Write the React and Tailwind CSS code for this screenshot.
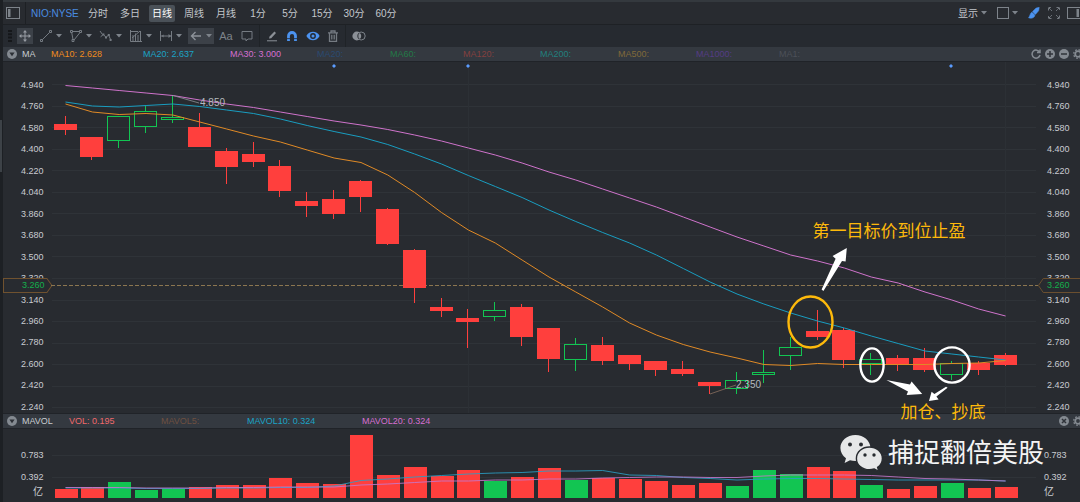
import { useState } from "react";

const periods = ["分时", "多日", "日线", "周线", "月线", "1分", "5分", "15分", "30分", "60分"];

const maItems = [
  { text: "MA10: 2.628", cls: "w-[92px] text-[#f08c1e]" },
  { text: "MA20: 2.637", cls: "w-[87px] text-[#1ba3c6]" },
  { text: "MA30: 3.000", cls: "w-[87px] text-[#d66fd0]" },
  { text: "MA20:", cls: "w-[73px] text-[#2b4a72]" },
  { text: "MA60:", cls: "w-[73px] text-[#237a47]" },
  { text: "MA120:", cls: "w-[77px] text-[#83403f]" },
  { text: "MA200:", cls: "w-[78px] text-[#22807f]" },
  { text: "MA500:", cls: "w-[78px] text-[#80693a]" },
  { text: "MA1000:", cls: "w-[83px] text-[#543c85]" },
  { text: "MA1:", cls: "w-[40px] text-[#4c5058]" },
];

const volItems = [
  { text: "VOL: 0.195", cls: "w-[92px] text-[#f0696c]" },
  { text: "MAVOL5:", cls: "w-[86px] text-[#6e5040]" },
  { text: "MAVOL10: 0.324", cls: "w-[115px] text-[#1ba3c6]" },
  { text: "MAVOL20: 0.324", cls: "w-[90px] text-[#d66fd0]" },
];

const prices = [
  "4.940", "4.760", "4.580", "4.400", "4.220", "4.040", "3.860", "3.680",
  "3.500", "3.320", "3.140", "2.960", "2.780", "2.600", "2.420", "2.240",
];

// [body top, body bottom, high, low, rising]
const candles = [
  [124, 130, 116, 135, 0],
  [137, 157, 137, 160, 0],
  [116, 141, 116, 148, 1],
  [111, 127, 106, 133, 1],
  [117, 120, 95, 123, 1],
  [127, 147, 113, 147, 0],
  [151, 167, 148, 184, 0],
  [154, 162, 142, 167, 0],
  [166, 191, 160, 197, 0],
  [201, 206, 192, 217, 0],
  [199, 214, 190, 219, 0],
  [181, 197, 180, 212, 0],
  [209, 244, 208, 245, 0],
  [250, 288, 249, 303, 0],
  [307, 311, 298, 317, 0],
  [318, 322, 309, 348, 0],
  [310, 317, 302, 321, 1],
  [307, 337, 304, 346, 0],
  [328, 359, 328, 372, 0],
  [344, 360, 338, 371, 1],
  [345, 361, 337, 365, 0],
  [355, 364, 355, 370, 0],
  [361, 370, 361, 376, 0],
  [369, 374, 361, 376, 0],
  [382, 386, 382, 394, 0],
  [380, 389, 372, 394, 1],
  [372, 375, 350, 383, 1],
  [347, 356, 337, 370, 1],
  [331, 337, 310, 340, 0],
  [330, 360, 328, 368, 0],
  [359, 364, 353, 375, 1],
  [358, 365, 355, 371, 0],
  [358, 370, 348, 372, 0],
  [363, 375, 361, 380, 1],
  [363, 370, 361, 375, 0],
  [355, 365, 353, 366, 0],
];

const ma10 = [
  104, 112, 114.5, 113.5, 115, 122, 129, 136, 142, 150, 158, 162.5, 175, 192.5, 212.5, 230, 243, 260,
  277, 292, 307, 323, 335, 344.5, 352, 358, 364.5, 365.5, 363.5, 364.5, 364.5, 364.5, 364.5, 363.5, 363, 360.5,
];
const ma20 = [
  102, 106, 107, 105.5, 104, 106.5, 110, 113.5, 119, 125.5, 131.5, 137, 144.5, 154, 164, 175.5, 186.5, 197.5,
  210, 221.5, 232.5, 243, 255, 268.5, 282, 294, 304, 313, 321, 328, 336, 343.5, 351, 354, 357, 360,
];
const ma30 = [
  85.5, 88, 90.5, 93, 95.5, 100, 104, 107.5, 112, 116.5, 121, 125, 129.5, 135, 141, 148, 155, 163,
  172, 180, 189, 198, 207, 217, 227, 237, 246, 255, 261, 268, 277, 283, 292, 300, 309, 316,
];

const volTops = [
  489, 487, 482, 490, 489, 487, 485, 485, 478, 483, 484, 435, 475, 467, 476, 470, 481, 477,
  468, 480, 478, 479, 481, 485, 483, 486, 470, 474, 467, 471, 485, 489, 486, 483, 488, 487,
];
const volMa10 = [
  488, 488, 488, 488.5, 488.5, 488.5, 488, 488, 487.5, 487.5, 486, 480.5, 479, 477, 475.5, 474, 473, 472.5,
  471, 471, 470.5, 475, 475.5, 477.5, 478.5, 480, 479, 478.5, 478.5, 479, 479.5, 480, 480, 480, 480, 481,
];
const volMa20 = [
  487.5, 487.5, 487.5, 488, 488, 488, 487.5, 487.5, 487, 487, 487, 485, 484, 482.5, 481, 481, 480, 480,
  479, 479, 478, 477.5, 477, 477, 477.5, 477.5, 476, 475, 475, 475, 475.5, 477, 478.5, 479, 480, 481,
];

const RED = "#ff3f3d";
const GREEN = "#12c552";

const cx = (i) => 65.5 + i * 26.86;
const line = (ys) => ys.map((y, i) => `${cx(i).toFixed(1)},${y}`).join(" ");

function Caret({ className = "" }) {
  return (
    <svg viewBox="0 0 6 4" className={`w-[6px] h-[4px] shrink-0 ${className}`} fill="#7d838a">
      <path d="M0 0h6L3 3.6z" />
    </svg>
  );
}

function Icon({ children, className = "w-3 h-3" }) {
  return (
    <svg viewBox="0 0 12 12" className={`shrink-0 ${className}`} fill="none" stroke="#757b82" strokeWidth="1">
      {children}
    </svg>
  );
}

function PanelIcon({ flip }) {
  return (
    <svg viewBox="0 0 14 12" className={`w-[14px] h-3 shrink-0 ${flip ? "-scale-x-100" : ""}`} fill="none" stroke="#7d838a">
      <rect x="0.5" y="0.5" width="13" height="11" />
      <rect x="2" y="2" width="2.5" height="8" fill="#7d838a" stroke="none" />
    </svg>
  );
}

function TopBar() {
  const [active, setActive] = useState("日线");
  return (
    <header className="flex items-center h-[25px] pl-[3px] border-t-2 border-b border-t-[#34393e] border-b-[#1e2125] text-[10px]">
      <button aria-label="Side panel" className="cursor-pointer">
        <PanelIcon />
      </button>
      <span className="w-px h-full ml-[5px] bg-[#1d2024]" />
      <a href="#quote" className="ml-[5px] w-[51px] shrink-0 text-[#4a8be0]">NIO:NYSE</a>
      <nav className="flex gap-[6px] ml-[3px]">
        {periods.map((p) => (
          <button
            key={p}
            onClick={() => setActive(p)}
            className={`w-[26px] h-[17px] flex items-center justify-center whitespace-nowrap rounded-[2px] cursor-pointer ${
              p === active ? "bg-[#4a5158] text-white" : "text-[#c3c7cc]"
            }`}
          >
            {p}
          </button>
        ))}
      </nav>
      <div className="flex items-center ml-auto shrink-0">
        <button className="flex items-center gap-[3px] text-[#c3c7cc] cursor-pointer">
          显示
          <Caret />
        </button>
        <button aria-label="Layout" className="flex items-center gap-[3px] ml-[10px] cursor-pointer">
          <Icon>
            <rect x="0.5" y="0.5" width="11" height="11" stroke="#7d838a" />
          </Icon>
          <Caret />
        </button>
        <button aria-label="Draw" className="ml-[10px] cursor-pointer">
          <Icon>
            <path d="M11.2 0.4L8.2 1L4.6 4.6L7.4 7.4L10.6 3.8z M4 5.2C2 6.2 2.2 8.8 0.6 10.8C3.4 11.8 6.8 10.8 6.8 8z" fill="#4c93f0" stroke="#4c93f0" strokeWidth="0.6" />
          </Icon>
        </button>
        <button aria-label="Full screen" className="ml-2 cursor-pointer">
          <Icon>
            <path d="M0.5 3.5v-3h3M8.5 0.5h3v3M11.5 8.5v3h-3M3.5 11.5h-3v-3M1 1l3 3M11 1l-3 3M11 11l-3-3M1 11l3-3" strokeDasharray="2.4 0.6" />
          </Icon>
        </button>
        <button aria-label="Right panel" className="ml-[7px] w-[13px] overflow-hidden cursor-pointer">
          <PanelIcon flip />
        </button>
      </div>
    </header>
  );
}

function Tool({ label, children }) {
  return (
    <button aria-label={label} className="flex items-center gap-1 cursor-pointer">
      {children}
      <Caret />
    </button>
  );
}

function ToolBar() {
  return (
    <div className="flex items-center h-[22px] pl-[5px] bg-[#262a30]">
      <svg viewBox="0 0 4 12" className="w-1 h-3 shrink-0" fill="#15171a">
        <path d="M0 0h4v2H0zM0 3.3h4v2H0zM0 6.6h4v2H0zM0 10h4v2H0z" />
      </svg>
      <button aria-label="Move" className="w-4 h-4 ml-[5px] flex items-center justify-center bg-[#3c4148] cursor-pointer">
        <Icon>
          <path d="M6 1v10M1 6h10" stroke="#979ca3" />
          <path d="M6 0l2 2.4H4zM6 12l2-2.4H4zM0 6l2.4-2v4zM12 6L9.6 4v4z" fill="#979ca3" stroke="none" />
        </Icon>
      </button>
      <div className="flex gap-2 ml-[7px]">
        <Tool label="Line">
          <Icon>
            <path d="M2.5 9.5L9.5 2.5" />
            <path d="M0.5 9.5h2v2h-2zM9.5 0.5h2v2h-2z" />
          </Icon>
        </Tool>
        <Tool label="Shape">
          <Icon>
            <path d="M2.5 1.5h7M1.7 2.5L3 9.5M10 2.5L4 10" />
            <path d="M0.5 0.5h2v2h-2zM9.5 0.5h2v2h-2zM2 9.5h2v2H2z" />
          </Icon>
        </Tool>
        <Tool label="Wave">
          <Icon className="w-[14px] h-3 -mx-px">
            <path d="M0 1L2.4 4.4M0.6 6.8L3.4 4.4L6 7.4L8.6 5L10.6 9.6" />
            <path d="M2.4 3.4h2v2h-2zM5 6.4h2v2H5zM7.8 4h2v2h-2zM9.6 9h2v2h-2z" fill="#757b82" stroke="none" />
          </Icon>
        </Tool>
        <Tool label="Statistics">
          <Icon>
            <path d="M0.5 0v11.5H12M0.5 1.5H8M3 5v6M5.5 3.5V11M8 5v6M10.5 1v10M2 8l8-7" />
          </Icon>
        </Tool>
        <Tool label="Measure">
          <Icon>
            <path d="M0.5 1v10M11.5 1v10M1 6h10" />
            <path d="M8.5 4v4l2.6-2zM3.6 4.6v2.8L1.6 6z" fill="#757b82" stroke="none" />
          </Icon>
        </Tool>
      </div>
      <button aria-label="Arrow" className="w-[26px] h-4 ml-[6px] flex items-center justify-center gap-1 bg-[#3c4148] cursor-pointer">
        <Icon>
          <path d="M11 6H1.5M5.5 2L1.5 6l4 4" stroke="#8d9299" strokeWidth="1.4" />
        </Icon>
        <Caret />
      </button>
      <button aria-label="Text" className="ml-[5px] w-[14px] text-[11px] leading-4 text-[#7d838a] cursor-pointer">Aa</button>
      <button aria-label="Comment" className="ml-2 cursor-pointer">
        <Icon>
          <path d="M1 1.5h10v7.5H7L5 11V9H1z" />
        </Icon>
      </button>
      <span className="w-px h-full ml-[6px] bg-[#1f2327]" />
      <button aria-label="Edit" className="ml-[6px] cursor-pointer">
        <Icon>
          <path d="M1 10.8h10" stroke="#8b9097" />
          <path d="M3 8.6L3.6 6.4L8.4 1.4L10 3L5.2 8.2z" fill="#8b9097" stroke="none" />
        </Icon>
      </button>
      <button aria-label="Magnet" className="ml-2 cursor-pointer">
        <Icon>
          <path d="M2.5 11V6a3.5 3.5 0 0 1 7 0v5" stroke="#4c93f0" strokeWidth="2.8" />
          <path d="M0.8 8.6h3.4M7.8 8.6h3.4" stroke="#262a30" strokeWidth="0.8" />
        </Icon>
      </button>
      <button aria-label="Visibility" className="ml-2 cursor-pointer">
        <Icon className="w-[14px] h-[14px]">
          <path d="M0.3 6C2.8 1.2 9.2 1.2 11.7 6C9.2 10.8 2.8 10.8 0.3 6z" fill="#4c93f0" stroke="none" />
          <circle cx="6" cy="6" r="1.9" fill="#4c93f0" stroke="#262a30" strokeWidth="1.2" />
        </Icon>
      </button>
      <button aria-label="Delete" className="ml-[7px] cursor-pointer">
        <Icon>
          <path d="M1 2.8h10M4 2.5V1h4v1.5M2.5 3v8.3h7V3M4.8 4.8v4.8M7.2 4.8v4.8" strokeWidth="1.3" />
        </Icon>
      </button>
      <span className="w-px h-full ml-[6px] bg-[#1f2327]" />
      <button aria-label="Compare" className="ml-[6px] cursor-pointer">
        <svg viewBox="0 0 14 10" className="w-[14px] h-[10px]">
          <circle cx="9.2" cy="5" r="4" fill="none" stroke="#7d838a" />
          <circle cx="4.8" cy="5" r="4.4" fill="#8b9097" />
          <path d="M7.4 1.8a4 4 0 0 0 0 6.4" fill="none" stroke="#262a30" />
        </svg>
      </button>
    </div>
  );
}

function Collapse() {
  return (
    <button aria-label="Collapse" className="w-[10px] h-[10px] shrink-0 cursor-pointer">
      <svg viewBox="0 0 10 10" className="w-full h-full">
        <circle cx="5" cy="5" r="5" fill="#848a91" />
        <path d="M2.4 3.6h5.2L5 7.2z" fill="#2c3036" />
      </svg>
    </button>
  );
}

function RoundIcon({ label, d, ring }) {
  return (
    <button aria-label={label} className="w-[10px] h-[10px] shrink-0 cursor-pointer">
      <svg viewBox="0 0 10 10" className="w-full h-full" fill="none">
        {!ring && <circle cx="5" cy="5" r="5" fill="#848a91" />}
        <path d={d} stroke={ring ? "#848a91" : "#2f333a"} strokeWidth="1.5" />
      </svg>
    </button>
  );
}

function Gear() {
  return (
    <button aria-label="Settings" className="w-[10px] h-[10px] shrink-0 cursor-pointer">
      <svg viewBox="0 0 10 10" className="w-full h-full" fill="none" stroke="#848a91">
        <circle cx="5" cy="5" r="2.8" strokeWidth="1.8" />
        <circle cx="5" cy="5" r="4.3" strokeWidth="1.3" strokeDasharray="1.7 1.68" />
      </svg>
    </button>
  );
}

function IndicatorBar({ name, items, nameCls, className, children }) {
  return (
    <div className={`flex items-center pl-1 bg-[#343940] border-b border-[#202328] text-[9px] leading-3 overflow-hidden ${className}`}>
      <Collapse />
      <span className={`ml-[5px] shrink-0 text-[#c8ccd0] ${nameCls}`}>{name}</span>
      {items.map((it) => (
        <span key={it.text} className={`shrink-0 whitespace-nowrap ${it.cls}`}>
          {it.text}
        </span>
      ))}
      <div className="ml-auto flex gap-1 -mr-[3px] shrink-0">{children}</div>
    </div>
  );
}

function PriceAxis({ right }) {
  return (
    <div
      className={`relative shrink-0 flex flex-col justify-between pt-[17px] text-[9px] leading-3 text-[#c8ccd0] ${
        right ? "w-10 pl-[7px]" : "w-[47px] pl-[18px]"
      }`}
    >
      {prices.map((p) => (
        <span key={p}>{p}</span>
      ))}
      {/* last price tag sits over the scale */}
      <div className={`absolute top-[61.5%] h-[15px] ${right ? "-left-[2px] right-0" : "left-0 -right-[2px]"}`}>
        <svg viewBox="0 0 48 15" preserveAspectRatio="none" className="absolute inset-0 w-full h-full" fill="#282b30" stroke="#70522f">
          {right ? <path d="M49 0.5H6L0.5 7.5L6 14.5H49" /> : <path d="M0.5 0.5H43L48 7.5L43 14.5H0.5z" />}
        </svg>
        <span className={`relative block leading-[15px] text-[#14b04c] ${right ? "pl-[9px]" : "pl-[19px]"}`}>3.260</span>
      </div>
    </div>
  );
}

function PriceChart() {
  return (
    <svg viewBox="50 62 990 351" className="flex-1 min-w-0 h-auto overflow-visible relative z-10">
      {prices.map((p, i) => (
        <path key={p} d={`M52 ${Math.round(84 + i * 21.55) + 0.5}H1036`} stroke="#2f3338" />
      ))}
      <path d="M468.5 62V413M1005.5 62V413" stroke="#2c3035" />
      <path d="M51 285.5H1038" stroke="#8c7650" strokeDasharray="4 2" />

      {[334, 468, 951].map((x) => (
        <path key={x} d={`M${x - 2} 66l2-2l2 2l-2 2z`} fill="#5a9cff" />
      ))}

      {candles.map(([top, bottom, high, low, up], i) => {
        const x = Math.round(cx(i)) - 0.5;
        const color = up ? GREEN : RED;
        return (
          <g key={i} stroke={color}>
            <path d={`M${x} ${high}V${top}M${x} ${bottom}V${low}`} />
            <rect x={x - 11} y={top + 0.5} width="22" height={bottom - top - 1} fill={up ? "none" : RED} />
          </g>
        );
      })}

      <g fill="none">
        <polyline points={line(ma30)} stroke="#cf73cb" />
        <polyline points={line(ma20)} stroke="#199dc0" />
        <polyline points={line(ma10)} stroke="#e08a26" />
      </g>

      <path d="M173 95.5L199 103" stroke="#8b9097" strokeWidth="0.8" />
      <path d="M710 394L736 385" stroke="#8b7060" strokeWidth="0.8" />
      <g fontSize="10" fill="#b4b9be">
        <text x="200" y="106">4.850</text>
        <text x="736" y="388">2.350</text>
      </g>

      <ellipse cx="810.5" cy="322" rx="22" ry="25.5" fill="none" stroke="#fdb90b" strokeWidth="2.4" />
      <g fill="none" stroke="#fff" strokeWidth="2.4">
        <ellipse cx="872" cy="365" rx="11.6" ry="16.6" />
        <ellipse cx="952" cy="365" rx="17.6" ry="17.6" />
      </g>
      <g fill="#fff">
        <path d="M821.6 289.6L835.6 258.8L832.6 256L846.8 248L845.6 261.6L842 261L823.4 291z" />
        <path d="M886.4 380L910 384.4L911.6 381.4L922.2 394L906.6 395L908 391.4z" />
        <path d="M946 386.8L934.4 394L931.6 391.8L929 401L938.6 399.6L936.4 396.4L947.6 387.8z" />
      </g>
      <g fontSize="17" fill="#fdb90b" textAnchor="middle">
        <text x="889" y="237">第一目标价到位止盈</text>
        <text x="943" y="418">加仓、抄底</text>
      </g>
    </svg>
  );
}

function VolumeAxis({ right }) {
  return (
    <div
      className={`shrink-0 flex flex-col pt-5 text-[9px] leading-3 text-[#c8ccd0] ${
        right ? "w-10 pl-1" : "w-[47px] pl-[18px]"
      }`}
    >
      <span>0.783</span>
      <span className="mt-[10px]">0.392</span>
      <span className={`mt-[3px] text-[10px] ${right ? "" : "pl-3"}`}>亿</span>
    </div>
  );
}

function VolumeChart() {
  return (
    <svg viewBox="50 429 990 73" className="flex-1 min-w-0 h-auto">
      <path d="M52 455.5H1036M52 477.5H1036" stroke="#2f3338" />
      {volTops.map((top, i) => (
        <rect
          key={i}
          x={Math.round(cx(i)) - 11}
          y={top}
          width="23"
          height={498 - top}
          fill={candles[i][4] ? GREEN : RED}
        />
      ))}
      <polyline points={line(volMa10)} fill="none" stroke="#2a9fc4" strokeOpacity="0.85" />
      <polyline points={line(volMa20)} fill="none" stroke="#c678cc" strokeOpacity="0.85" />
    </svg>
  );
}

function Watermark() {
  return (
    <div className="absolute right-9 top-1 flex items-center gap-1 text-[#f4f4f4]">
      <svg viewBox="0 0 44 38" className="w-11 h-[38px]" fill="#e6e7e8">
        <path d="M15.4 1C7 1 0.4 6.8 0.4 14C0.4 18.2 2.6 21.8 6 24.2L4.6 29L10 26.3C11.7 26.8 13.5 27 15.4 27C23.8 27 30.4 21.2 30.4 14S23.8 1 15.4 1z" />
        <path
          d="M29.4 13C22.2 13 16.4 18 16.4 24.4S22.2 35.8 29.4 35.8C31.2 35.8 32.8 35.5 34.3 35L38.8 37.4L37.6 33.4C40.6 31.3 42.4 28 42.4 24.4C42.4 18 36.6 13 29.4 13z"
          stroke="#282b30"
          strokeWidth="1.4"
        />
        <g fill="#282b30">
          <circle cx="10" cy="10.4" r="2" />
          <circle cx="21" cy="10.4" r="2" />
          <circle cx="25" cy="21" r="1.7" />
          <circle cx="34" cy="21" r="1.7" />
        </g>
      </svg>
      <span className="text-[26px] leading-10 whitespace-nowrap">捕捉翻倍美股</span>
    </div>
  );
}

export default function App() {
  return (
    <div className="flex min-h-screen overflow-hidden bg-[#282b30] font-['Liberation_Sans','Noto_Sans_CJK_SC',sans-serif]">
      <aside className="w-[3px] shrink-0 bg-[#1d2024] pt-[120px]">
        <div className="w-[2px] h-[52px] bg-[#3d4247]" />
      </aside>
      <main className="flex-1 min-w-0">
        <TopBar />
        <ToolBar />
        <IndicatorBar name="MA" nameCls="w-[29px]" items={maItems} className="h-[15px]">
          <RoundIcon label="Reset" ring d="M8.6 3.2A4 4 0 1 0 9 6M9 0.6V3.6H6" />
          <RoundIcon label="Add" d="M5 2v6M2 5h6" />
          <RoundIcon label="Remove" d="M2 5h6" />
          <Gear />
        </IndicatorBar>
        <section className="flex">
          <PriceAxis />
          <PriceChart />
          <PriceAxis right />
        </section>
        <IndicatorBar name="MAVOL" nameCls="w-[47px]" items={volItems} className="h-4 border-t">
          <RoundIcon label="Close" d="M3 3l4 4M7 3L3 7" />
          <Gear />
        </IndicatorBar>
        <section className="relative flex">
          <VolumeAxis />
          <VolumeChart />
          <VolumeAxis right />
          <Watermark />
        </section>
      </main>
    </div>
  );
}
